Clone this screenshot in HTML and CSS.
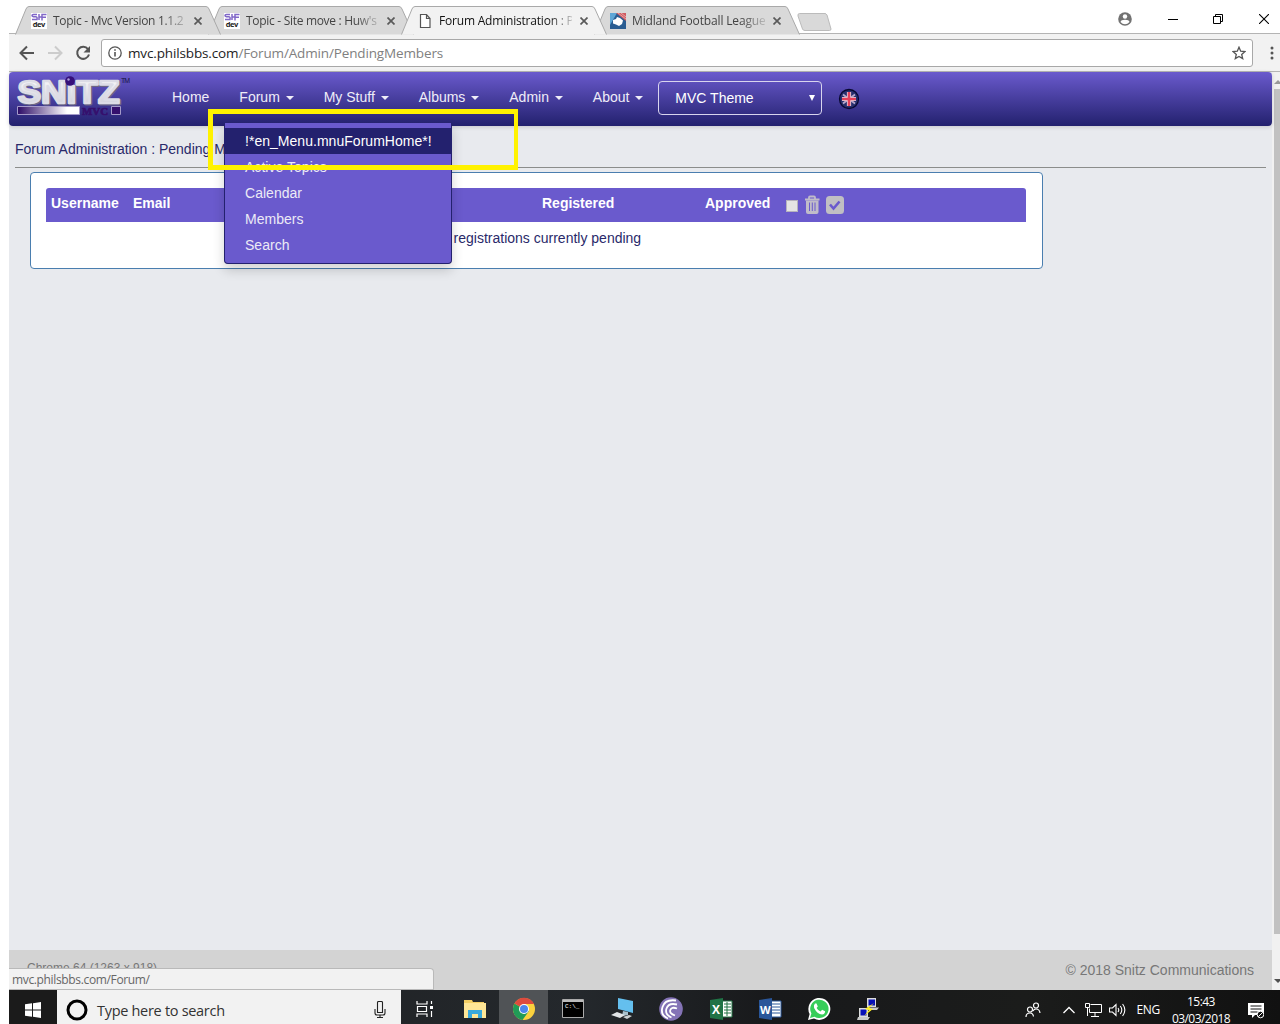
FILE: index.html
```html
<!DOCTYPE html>
<html lang="en">
<head>
<meta charset="utf-8">
<title>Forum Administration : Pending Members</title>
<link rel="stylesheet" href="styles.css">
</head>
<body>
<svg width="0" height="0" class="defs">
  <defs>
    <symbol id="tab-shape" viewBox="0 0 206 29"><path d="M.5 28.5 11 3Q12 .5 14 .5H191Q193 .5 194 3L205.5 28.5" /></symbol>
    <symbol id="snitz" viewBox="0 0 16 16"><path fill="#fff" d="M0 0h16v16H0z"/><path d="M6 1.500H2.500Q1 1.500 1 2.500t1.500 1.300H5Q6.500 4 6 6.500H1M8 1v6M8 4h3M15.500 1.500H11V7.500M11 4.200h4" fill="none" stroke="#8168c8" stroke-width="1.500"/><text x="1.800" y="14.400" font-size="7.500" font-weight="700" font-family="Open Sans, sans-serif" fill="#222" textLength="12.500">dev</text></symbol>
    <symbol id="close" viewBox="0 0 8 8"><path d="M.5.5l7 7m0-7l-7 7" fill="none" stroke="#5a5a5a" stroke-width="1.700"/></symbol>
    <linearGradient id="bar" x2="1"><stop stop-color="#2c0b66"/><stop offset=".8" stop-color="#fff"/></linearGradient>
    <linearGradient id="silver" x2="0" y2="1"><stop stop-color="#fff"/><stop offset="1" stop-color="#c8c8d4"/></linearGradient>
  </defs>
</svg>
<div class="window">
  <header class="tabstrip">
    <div class="tab t1"><svg class="shape"><use href="#tab-shape"/></svg><svg class="fav"><use href="#snitz"/></svg><span class="label">Topic - Mvc Version 1.1.2</span><svg class="x"><use href="#close"/></svg></div>
    <div class="tab t2"><svg class="shape"><use href="#tab-shape"/></svg><svg class="fav"><use href="#snitz"/></svg><span class="label">Topic - Site move : Huw's</span><svg class="x"><use href="#close"/></svg></div>
    <div class="tab active"><svg class="shape"><use href="#tab-shape"/></svg><svg class="fav" viewBox="0 0 16 16"><path d="M3.500 1.500h6l3.500 4v9H3.500zM9.500 1.500v4H13" fill="#fff" stroke="#555" stroke-width="1.200"/></svg><span class="label">Forum Administration : P</span><svg class="x"><use href="#close"/></svg></div>
    <div class="tab t4"><svg class="shape"><use href="#tab-shape"/></svg><svg class="fav" viewBox="0 0 16 16"><path fill="#2a5d92" d="M0 0h16v16H0z"/><path fill="#5fa6d6" d="M0 0h7L0 12z"/><path d="M6 0l10 8V0z" fill="#d05a60"/><path d="M8 0l8 6M11 0l5 4" stroke="#f2c4c4" stroke-width=".7"/><path d="M3 7l3-1 1-2 3 1 3 2.500-1 3.500-3 2-3-1.500-3-1z" fill="#fff"/></svg><span class="label">Midland Football League</span><svg class="x"><use href="#close"/></svg></div>
    <svg class="newtab" viewBox="0 0 35 19"><path d="M2.500.5H28Q29 .5 30 2l4 14q0 1.500-1.500 1.500H8Q6 17.500 5.500 16L1 3Q.5.5 2.500.5z" fill="#d9d9d9" stroke="#bbb"/></svg>
    <div class="controls">
      <svg width="14" height="14" viewBox="0 0 14 14"><circle cx="7" cy="7" r="6.800" fill="#727272"/><circle cx="7" cy="4.500" r="2.200" fill="#fff"/><path d="M2.500 10Q3 7.800 7 7.800T11.500 10Q9.500 12.300 7 12.300T2.500 10z" fill="#fff"/></svg>
      <svg width="10" height="12" viewBox="0 0 10 12"><path d="M0 6.500h10" stroke="#000"/></svg>
      <svg width="10" height="10" viewBox="0 0 10 10"><path d="M.5 2.500h7v7h-7zM2.500 2.500v-2h7v7h-2" fill="none" stroke="#000"/></svg>
      <svg width="10" height="10" viewBox="0 0 10 10"><path d="M0 0l10 10M10 0L0 10" stroke="#000" stroke-width="1.100"/></svg>
    </div>
  </header>
  <div class="toolbar">
    <svg class="back" viewBox="0 0 16 16"><path d="M15 8H2M8 1.500L1.500 8 8 14.500" fill="none" stroke="#555" stroke-width="2"/></svg>
    <svg class="fwd" viewBox="0 0 16 16"><path d="M1 8h13M8 1.500L14.500 8 8 14.500" fill="none" stroke="#ccc" stroke-width="2"/></svg>
    <svg class="reload" viewBox="0 0 16 16"><path d="M13 4.200A6 6 0 1 0 14 9.500" fill="none" stroke="#555" stroke-width="2"/><path d="M15 1v6.500H8.500z" fill="#555"/></svg>
    <div class="omnibox">
      <svg width="14" height="14" viewBox="0 0 14 14"><circle cx="7" cy="7" r="6.200" fill="none" stroke="#555" stroke-width="1.300"/><path d="M7 6v4.500M7 3.300v1.500" stroke="#555" stroke-width="1.600"/></svg>
      <span class="url"><b>mvc.philsbbs.com</b>/Forum/Admin/PendingMembers</span>
      <svg class="star" width="14" height="14" viewBox="0 0 14 14"><path d="M7 1.200l1.700 4 4.200.4-3.200 2.800 1 4.200L7 10.400l-3.700 2.200 1-4.200L1.100 5.600l4.200-.4z" fill="none" stroke="#555" stroke-width="1.300"/></svg>
    </div>
    <svg class="dots" width="4" height="14" viewBox="0 0 4 14"><g fill="#555"><circle cx="2" cy="2" r="1.500"/><circle cx="2" cy="7" r="1.500"/><circle cx="2" cy="12" r="1.500"/></g></svg>
  </div>
  <div class="viewport">
    <div class="page">
      <nav class="navbar">
        <svg class="logo" width="118" height="42" viewBox="0 0 118 42">
          <g font-family="Liberation Sans, sans-serif" font-weight="700" font-size="31" stroke-linejoin="round">
            <text x="2.500" y="28" textLength="102" lengthAdjust="spacingAndGlyphs" fill="#6a6685" stroke="#6a6685" stroke-width="3">SNıTZ</text>
            <text x="1.500" y="27" textLength="102" lengthAdjust="spacingAndGlyphs" fill="url(#silver)" stroke="#dcdce6" stroke-width="2.400">SNıTZ</text>
          </g>
          <circle cx="54" cy="5" r="4.800" fill="#35107a"/><circle cx="52.500" cy="3.500" r="1.200" fill="#a99ad8"/>
          <text x="105" y="7" font-family="Liberation Sans, sans-serif" font-size="7" fill="#17133f" textLength="9">TM</text>
          <path d="M1.500 30.500h62v8h-62z" fill="url(#bar)" stroke="#a49ac9"/>
          <text x="66" y="38.500" font-family="Liberation Serif, serif" font-weight="700" font-size="10.500" fill="#35106d" stroke="#35106d" stroke-width=".7" textLength="26" lengthAdjust="spacingAndGlyphs">MVC</text>
          <path d="M95.500 30.500h9v8h-9z" fill="#35106d" stroke="#a49ac9"/>
        </svg>
        <ul class="menu">
          <li>Home</li><li>Forum <i class="caret"></i></li><li>My Stuff <i class="caret"></i></li><li>Albums <i class="caret"></i></li><li>Admin <i class="caret"></i></li><li>About <i class="caret"></i></li>
        </ul>
        <div class="theme"><span>MVC Theme</span><i></i></div>
        <svg class="flag" width="22" height="22" viewBox="0 0 22 22"><circle cx="11" cy="11" r="9.500" fill="#28306e" stroke="#080832" stroke-width="1.300"/><path d="M5 6.500l12 9M17 6.500l-12 9" stroke="#b9a8cc" stroke-width="1.800"/><path d="M11 4v14M4 11h14" stroke="#e6d6e2" stroke-width="4.200"/><path d="M11 4v14M4 11h14" stroke="#e5405a" stroke-width="2.600"/></svg>
        <ul class="dropdown"><li class="on">!*en_Menu.mnuForumHome*!</li><li>Active Topics</li><li>Calendar</li><li>Members</li><li>Search</li></ul>
      </nav>
      <div class="crumb">Forum Administration : Pending Members</div>
      <section class="panel">
        <div class="thead"><span class="c1">Username</span><span class="c2">Email</span><span class="c3">Registered</span><span class="c4">Approved</span>
          <i class="check"></i>
          <svg class="trash" width="16" height="20" viewBox="0 0 16 20"><path d="M1 4.500h14.500M5 4V2.500q0-1 1-1h4q1 0 1 1V4" fill="none" stroke="#c0bcc9" stroke-width="1.800"/><path d="M2 5.500h12.500v11.500q0 2-2 2H4q-2 0-2-2z" fill="#c0bcc9"/><path d="M5.500 7.500v8.500M8.300 7.500v8.500M11 7.500v8.500" stroke="#6a5acd"/></svg>
          <svg width="18" height="20" viewBox="0 0 18 20"><rect x="0" y="1" width="18" height="18" rx="3.500" fill="#c0bfc3"/><path d="M4 9.500l3.500 4 6-7" fill="none" stroke="#6a5acd" stroke-width="2.600"/></svg>
        </div>
        <p>No registrations currently pending</p>
      </section>
      <footer class="footer"><span class="ver">Chrome 64 (1263 x 918)</span><span class="copy">© 2018 Snitz Communications</span></footer>
      <div class="status">mvc.philsbbs.com/Forum/</div>
      <div class="highlight"></div>
    </div>
    <div class="scroll"><i class="up"></i><i class="thumb"></i><i class="down"></i></div>
  </div>
  <div class="taskbar">
    <div class="start"><svg width="16" height="16" viewBox="0 0 16 16"><path d="M0 2.300l7-1v6.200H0zM8 1.200L16 0v7.500H8zM0 8.500h7v6.200l-7-1zM8 8.500h8V16l-8-1.200z" fill="#fff"/></svg></div>
    <div class="search"><svg width="22" height="22" viewBox="0 0 22 22"><circle cx="11" cy="11" r="9" fill="none" stroke="#000" stroke-width="3"/></svg><span>Type here to search</span><svg width="12" height="18" viewBox="0 0 12 18"><path d="M3.500 1.500q0-1 1-1h3q1 0 1 1v10h-5zM1 8v4q0 2 2 2h6q2 0 2-2V8M6 14v3M3 16.500h6" fill="none" stroke="#222" stroke-width="1.100"/></svg></div>
    <div class="apps">
      <div><svg viewBox="0 0 24 24"><path d="M4 4v3h10V4M4 20v-3h10v3M4.500 9.500h9v5h-9zM18.500 4v3M18.500 14v6" fill="none" stroke="#fff" stroke-width="1.200"/><path d="M17 9h3v3h-3z" fill="#fff"/></svg></div>
      <div><svg viewBox="0 0 24 24"><path d="M1 3h8l1 2h11v16H1z" fill="#f4ce63"/><path d="M1 6h22v15H1z" fill="#ffe696"/><path d="M5 21v-8h14v8h-4v-4H9v4z" fill="#3aa9dc"/></svg></div>
      <div class="current"><svg viewBox="0 0 24 24"><circle cx="12" cy="12" r="11" fill="#fbd13d"/><path d="M12 12L2.500 6.500A11 11 0 0 0 10.500 23L17 14z" fill="#219b57"/><path d="M12 12L2.500 6.500A11 11 0 0 1 22 7H12z" fill="#dd4b3e"/><circle cx="12" cy="12" r="5" fill="#fff"/><circle cx="12" cy="12" r="4" fill="#4b86ec"/></svg></div>
      <div><svg viewBox="0 0 24 24"><path d="M1.500 2.500h21v18h-21z" fill="#000" stroke="#aaa"/><path d="M2 3h20v2H2z" fill="#bbb"/><text x="4" y="11" font-size="6" font-family="Liberation Mono, monospace" fill="#fff">C:\_</text></svg></div>
      <div><svg viewBox="0 0 24 24"><path d="M8 1l15 3v12L8 12z" fill="#64bfee"/><path d="M13 14l5 1v3l-6 1z" fill="#aac1cc"/><path d="M1 18l6-3 8 3-5 3z" fill="#e2e5e7"/><path d="M13 20l6-2 3 1-5 3z" fill="#ccd1d3"/></svg></div>
      <div><svg viewBox="0 0 24 24"><circle cx="12" cy="12" r="11.800" fill="#8473b6"/><path d="M17 3.500Q6 2 3.500 10T9 21.500M18 7.500Q9.500 5.500 7.500 11.500T12.500 20.500M18 11.500Q12.500 9.500 11.300 13T16 18.500" fill="none" stroke="#fff" stroke-width="1.800"/></svg></div>
      <div><svg viewBox="0 0 24 24"><path d="M13 4h10v16H13z" fill="#fff" stroke="#237245"/><path d="M15 7h7M15 10h7M15 13h7M15 16h7M18 5v14" stroke="#237245"/><path d="M1 3l13-2v22L1 21z" fill="#207346"/><text x="3" y="16.500" font-size="12" font-weight="700" font-family="Open Sans, sans-serif" fill="#fff">X</text></svg></div>
      <div><svg viewBox="0 0 24 24"><path d="M13 4h10v16H13z" fill="#fff" stroke="#2a5699"/><path d="M14 7h8M14 10h8M14 13h8M14 16h8" stroke="#2a5699"/><path d="M1 3l13-2v22L1 21z" fill="#2a5699"/><text x="2" y="16.500" font-size="11" font-weight="700" font-family="Open Sans, sans-serif" fill="#fff">W</text></svg></div>
      <div><svg viewBox="0 0 24 24"><path d="M1 23l1.600-6A11 11 0 1 1 7 21.500z" fill="#fff"/><path d="M3 21l1.400-4.500A9.200 9.200 0 1 1 7.500 19.700z" fill="#37cd59"/><path d="M8 6.500l1.500 0 1.300 3-1.200 1.500q1.500 2.800 4 3.500l1.500-1.700 3 1.500q0 3-3 3.200-5-.5-8-6.500-.8-3 .9-4.500z" fill="#fff"/></svg></div>
      <div><svg viewBox="0 0 24 24"><path d="M11 1h9v9h-9zM3 11h9v9H3z" fill="#ddd"/><path d="M12.500 2.500h6.500v6h-6.500zM4.500 12.500h6v6h-6z" fill="#0710b8"/><path d="M11 10.500h12l-2 2.500H10zM2 20h12l-2 3H1z" fill="#c8c8c8"/><path d="M18 6l-9 6 4 1-5 6 9-7-4-1z" fill="#ffef20"/></svg></div>
    </div>
    <div class="tray">
      <svg width="16" height="16" viewBox="0 0 16 16"><g fill="none" stroke="#fff" stroke-width="1.200"><circle cx="5" cy="7.500" r="2.500"/><path d="M1 15q0-4 4-4 3 0 3.500 3.500"/><circle cx="11" cy="3.500" r="2.500"/><path d="M8 9q1-2 3-2 3.500 0 4 4"/></g></svg>
      <svg width="12" height="8" viewBox="0 0 12 8"><path d="M.5 7L6 1.500 11.500 7" fill="none" stroke="#fff" stroke-width="1.300"/></svg>
      <svg width="17" height="14" viewBox="0 0 17 14"><path d="M5.500 1.500h11v8h-12v-4M.5.500h4v4h-4zM2.500 5v8M10 10v3M6 13.500h8" fill="none" stroke="#fff"/></svg>
      <svg width="17" height="14" viewBox="0 0 17 14"><path d="M.5 5h3L7 1.500v11L3.500 9h-3zM9 5q1.500 2 0 4M11.300 3q3 4 0 8M13.600 1q4.500 6 0 12" fill="none" stroke="#fff" stroke-width="1.100"/></svg>
      <span class="lang">ENG</span>
      <div class="clock"><span>15:43</span><span>03/03/2018</span></div>
      <svg width="16" height="17" viewBox="0 0 16 17"><path d="M0 1h16v12H7l-3 3v-3H0z" fill="#fff"/><path d="M2.500 4h11M2.500 7h11M2.500 10h7" stroke="#111"/><circle cx="12.500" cy="12.500" r="3.300" fill="#111" stroke="#fff"/><path d="M10.300 14.700l4.400-4.400" stroke="#fff"/></svg>
    </div>
  </div>
</div>
</body>
</html>
```
FILE: styles.css
```css
* { box-sizing: border-box; }
body { margin: 0; background: #fff; overflow: hidden; font: 14px/20px "Liberation Sans", Arial, sans-serif; }
svg { flex: none; display: block; }
ul { list-style: none; margin: 0; padding: 0; }
.defs { position: absolute; }
.window { height: 1024px; margin-left: 9px; display: flex; flex-direction: column; }

.tabstrip { height: 34px; flex: none; padding: 6px 0 0 6px; display: flex; position: relative; border-bottom: 1px solid #b4b4b4; }
.tab { position: relative; width: 193px; height: 29px; flex: none; display: flex; align-items: center; padding-left: 16px; font: 12px/18px "Open Sans", sans-serif; color: #444; z-index: 3; }
.t2 { z-index: 2; }
.t4 { z-index: 1; }
.tab.active { z-index: 5; color: #111; }
.shape { position: absolute; left: 0; top: 0; width: 206px; height: 29px; z-index: -1; fill: #d9d9d9; stroke: #a9a9a9; }
.active .shape { fill: #f2f2f2; }
.fav { width: 16px; height: 16px; }
.label { width: 133px; margin: 0 8px 0 6px; white-space: nowrap; overflow: hidden; letter-spacing: -.3px; -webkit-mask-image: linear-gradient(90deg, #000 82%, rgba(0,0,0,.2)); mask-image: linear-gradient(90deg, #000 82%, rgba(0,0,0,.2)); }
.active .label { letter-spacing: -.2px; }
.t4 .label { letter-spacing: -.15px; }
.x { width: 8px; height: 8px; }
.newtab { width: 35px; height: 19px; margin: 7px 0 0 10px; }
.controls { margin-left: auto; display: flex; align-items: center; height: 26px; gap: 36px; padding-right: 11px; }
.controls svg:first-child { margin-right: 0; }
.controls svg:nth-child(2) { margin-right: -1px; }

.toolbar { height: 38px; flex: none; background: #f2f2f2; border-bottom: 1px solid #b5b5b5; display: flex; align-items: center; padding: 0 7px 0 10px; }
.toolbar > svg { width: 16px; height: 16px; }
.toolbar .fwd { margin-left: 12px; }
.toolbar .reload { margin: 0 10px 0 12px; }
.toolbar .dots { width: 4px; height: 14px; margin: 0 -1px 0 auto; }
.omnibox { width: 1152px; height: 28px; background: #fff; border: 1px solid #a8a8a8; border-radius: 3px; display: flex; align-items: center; padding: 0 6px; }
.url { margin-left: 6px; font: 13.500px/20px "Open Sans", sans-serif; color: #808080; letter-spacing: -.14px; }
.url b { font-weight: 400; color: #222; }
.star { margin-left: auto; }

.viewport { height: 918px; flex: none; display: flex; }
.page { width: 1263px; position: relative; background: #e8eaee; display: flex; flex-direction: column; color: #191970; }
.navbar { position: relative; height: 54px; flex: none; display: flex; background: linear-gradient(#6a5acd, #23216e); border-radius: 4px; box-shadow: 0 1px 4px rgba(0,0,0,.15); }
.logo { margin: 4px 0 0 7px; }
.menu { display: flex; padding: 15px 0 0 23px; color: #efedf8; }
.menu li { padding: 0 15px; white-space: nowrap; }
.caret { display: inline-block; margin-left: 2px; vertical-align: middle; border: 4px solid transparent; border-top-color: #efedf8; border-bottom: 0; }
.theme { width: 164px; height: 34px; margin: 9px 0 0; border: 1px solid #d8d5ee; border-radius: 4px; padding: 0 6px 0 16px; display: flex; align-items: center; justify-content: space-between; color: #fff; }
.theme i { border: 3px solid transparent; border-top: 6px solid #fff; border-bottom: 0; }
.flag { margin: 16px 0 0 16px; }
.dropdown { position: absolute; z-index: 2; left: 215px; top: 51px; width: 228px; height: 141px; padding-top: 5px; background: #6a5acd; border: 1px solid #23216e; border-top: 0; border-radius: 0 0 4px 4px; box-shadow: 0 6px 12px rgba(0,0,0,.18); color: #eceaf6; letter-spacing: .03px; }
.dropdown li { height: 26px; line-height: 26px; padding-left: 20px; }
.dropdown .on { background: #23216e; color: #fff; }
.crumb { height: 42px; flex: none; margin: 0 6px; padding-top: 13px; border-bottom: 1px solid #8b8d8b; color: #29296a; }
.panel { width: 1013px; height: 97px; margin: 4px 0 0 21px; background: #fff; border: 1px solid #4a7eaf; border-radius: 4px; padding: 15px; }
.thead { width: 980px; height: 34px; display: flex; align-items: center; background: #6a5acd; border-radius: 3px 3px 0 0; color: #fff; font-weight: 700; padding: 0 0 4px 5px; }
.c1 { width: 82px; }
.c2 { width: 409px; }
.c3 { width: 163px; }
.c4 { width: 81px; }
.thead svg { margin-top: 4px; }
.check { width: 12px; height: 12px; margin: 5px 6px 0 0; background: #e4e4e4; border: 1px solid #b5b2bd; }
.trash { margin-right: 6px; }
.panel p { margin: 6px 0 0; text-align: center; color: #29296a; }
.footer { height: 40px; margin-top: auto; background: #d3d3d3; display: flex; justify-content: space-between; padding: 10px 18px; color: #777; }
.ver { font-size: 12px; line-height: 16px; }
.status { position: absolute; left: 0; bottom: 0; width: 425px; height: 22px; background: #f2f2f2; border: 1px solid #b9b9b9; border-left: 0; border-radius: 0 4px 0 0; padding-left: 3px; font: 12px/21px "Open Sans", sans-serif; color: #666; letter-spacing: -.35px; }
.highlight { position: absolute; z-index: 3; left: 199px; top: 37px; width: 310px; height: 61px; border: 5px solid #fff200; border-right-width: 4px; }
.scroll { flex: 1; background: #f1f1f1; display: flex; flex-direction: column; align-items: flex-end; overflow: hidden; }
.scroll .up { margin: 8px -2px 5px 0; border: 4px solid transparent; border-top: 0; border-bottom-color: #999; }
.scroll .thumb { width: 6px; height: 845px; background: #c1c1c1; }
.scroll .down { margin: 45px -2px 0 0; border: 4px solid transparent; border-bottom: 0; border-top-color: #505050; }

.taskbar { height: 34px; flex: none; display: flex; background: linear-gradient(90deg, #1d1e20, #24282c 45%, #18191b 60%, #1b1c1b 80%, #111); color: #fff; font-family: "Open Sans", sans-serif; }
.start { width: 48px; padding: 12px 0 0 16px; background: #1b1b1b; }
.search { width: 344px; height: 34px; background: #f2f2f2; color: #333; display: flex; align-items: center; padding: 6px 15px 0 9px; font-size: 14.500px; }
.search span { margin: 2px auto 0 9px; letter-spacing: -.3px; }
.apps { display: flex; }
.apps div { width: 49.100px; padding: 7px 0 0 13px; }
.apps div:first-child { padding-left: 12px; }
.apps svg { width: 24px; height: 24px; }
.apps .current { background: #505356; }
.tray { margin-left: auto; display: flex; align-items: center; padding: 6px 16px 0 0; font-size: 12px; }
.tray > svg:nth-child(1) { margin-right: 22px; }
.tray > svg:nth-child(2) { margin-right: 10px; }
.tray > svg:nth-child(3) { margin-right: 7px; }
.lang { margin: 0 11px 0 10px; letter-spacing: -.3px; }
.clock { display: flex; flex-direction: column; align-items: center; width: 60px; margin-right: 17px; line-height: 17px; letter-spacing: -.55px; }
```
